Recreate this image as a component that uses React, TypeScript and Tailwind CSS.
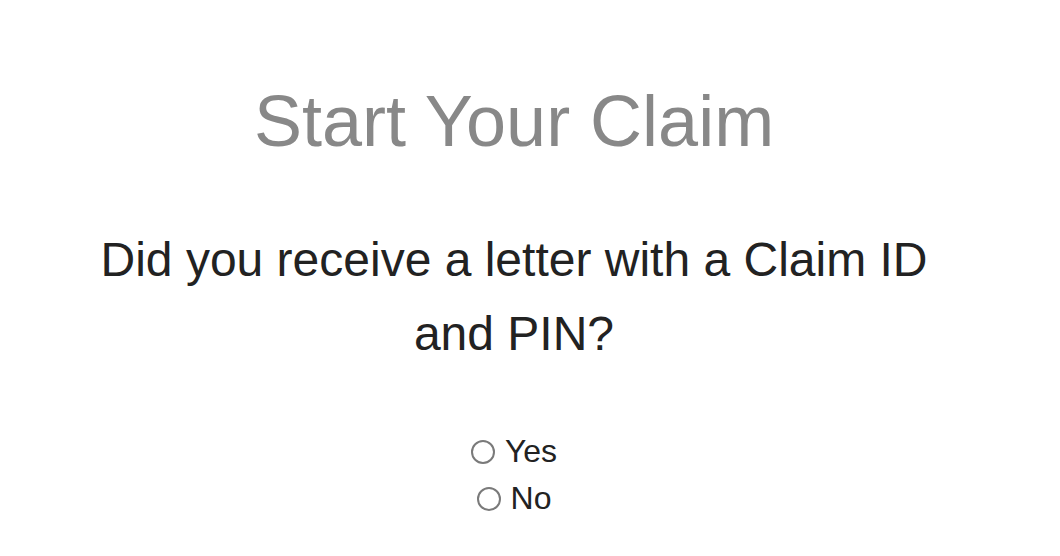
import React from 'react';

const options = ['Yes', 'No'];

export default function App() {
  return (
    <div className="w-[1028px] bg-white pt-[81px] text-center" style={{ fontFamily: '"Liberation Sans", Arial, sans-serif' }}>
      <h1 className="text-[72px] leading-[80px] text-[#888888]">Start Your Claim</h1>

      <h2 className="mx-auto mt-[62px] w-[860px] text-[48px] leading-[74px] text-[#222222]">
        Did you receive a letter with a Claim ID and PIN?
      </h2>

      <div className="mt-[57px] flex flex-col items-center">
        {options.map((opt) => (
          <label key={opt} className="flex items-center gap-[10px] text-[32px] leading-[47px] text-[#222222]">
            <input
              type="radio"
              name="letter"
              value={opt}
              className="h-6 w-6 appearance-none rounded-full border-2 border-[#7a7a7a] bg-white"
            />
            {opt}
          </label>
        ))}
      </div>
    </div>
  );
}
